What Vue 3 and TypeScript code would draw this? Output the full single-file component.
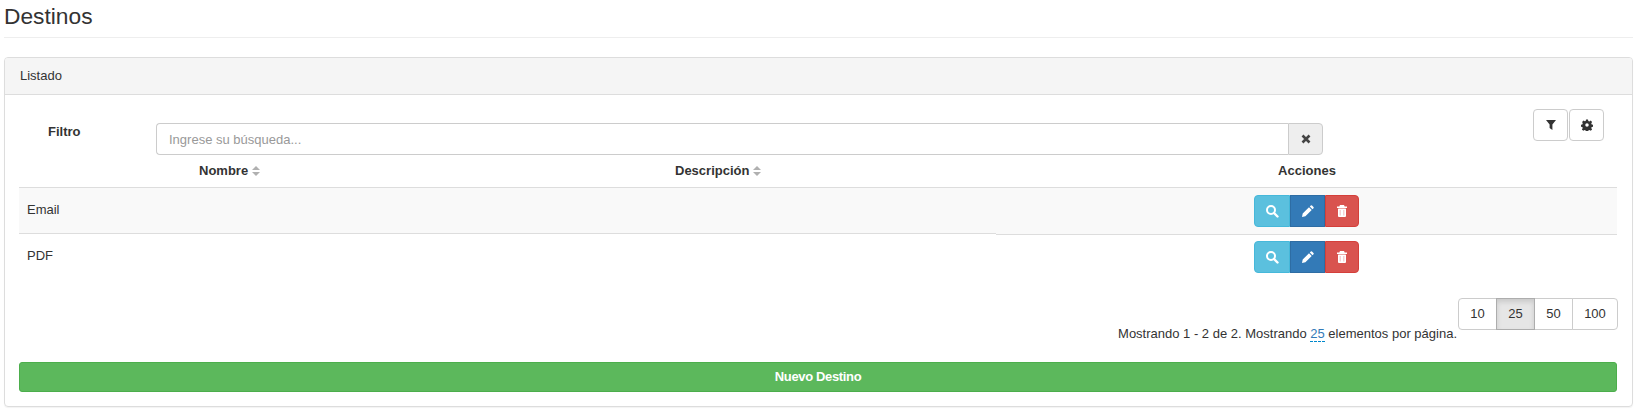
<script setup lang="ts">
interface Row { name: string }
const rows: Row[] = [{ name: 'Email' }, { name: 'PDF' }]
const sizes = [10, 25, 50, 100]
</script>

<template>
  <div class="page">
    <h3 class="title">Destinos</h3>
    <section class="panel">
      <div class="panel-head">Listado</div>
      <div class="panel-body">
        <div class="filter-row">
          <label class="filter-label">Filtro</label>
          <div class="search">
            <input class="search-input" placeholder="Ingrese su búsqueda..." />
            <button class="search-clear" aria-label="Limpiar">
              <svg viewBox="0 0 10 10" width="10" height="10"><path d="M1.500 1.500l7 7M8.500 1.500l-7 7" stroke="#444" stroke-width="2.600" fill="none" /></svg>
            </button>
          </div>
          <div class="tools">
            <button class="tool" aria-label="Filtrar">
              <svg viewBox="0 0 12 12" width="12" height="12"><path d="M1 1h10L7.400 5.600V11L4.600 9V5.600z" fill="#333" /></svg>
            </button>
            <button class="tool" aria-label="Configurar">
              <svg viewBox="0 0 24 24" width="12" height="12"><path fill="#333" fill-rule="evenodd" d="M10 1h4l.6 3 2.200.9 2.600-1.700 2.800 2.800-1.700 2.600.9 2.200 3 .6v4l-3 .6-.9 2.200 1.700 2.600-2.800 2.800-2.600-1.700-2.200.9-.6 3h-4l-.6-3-2.200-.9-2.600 1.700-2.800-2.800 1.700-2.600-.9-2.200-3-.6v-4l3-.6.9-2.200L2.200 5.800 5 3l2.600 1.700 1.800-.7zM12 8.500a3.500 3.500 0 1 0 0 7 3.500 3.500 0 0 0 0-7z" /></svg>
            </button>
          </div>
        </div>

        <div class="table">
          <div class="thead">
            <div class="th th-name">Nombre <svg class="sort" viewBox="0 0 8 10" width="8" height="10"><path d="M4 0l4 4H0zM0 6h8l-4 4z" fill="#b0b0b0" /></svg></div>
            <div class="th th-desc">Descripción <svg class="sort" viewBox="0 0 8 10" width="8" height="10"><path d="M4 0l4 4H0zM0 6h8l-4 4z" fill="#b0b0b0" /></svg></div>
            <div class="th th-act">Acciones</div>
          </div>
          <div v-for="(row, i) in rows" :key="row.name" class="tr" :class="{ odd: i === 0 }">
            <div class="cell-main">{{ row.name }}</div>
            <div class="cell-actions">
              <div class="actions">
                <button class="act info" aria-label="Ver">
                  <svg viewBox="0 0 14 14" width="14" height="14"><circle cx="6" cy="6" r="4" fill="none" stroke="#fff" stroke-width="2" /><path d="M9 9l3.500 3.500" stroke="#fff" stroke-width="2.400" stroke-linecap="round" /></svg>
                </button>
                <button class="act primary" aria-label="Editar">
                  <svg viewBox="0 0 14 14" width="14" height="14"><path d="M1 13l.7-3.400 6.300-6.300 2.700 2.700-6.300 6.300zM8.800 2.500l1-1q.6-.5 1.200 0l1.500 1.500q.5.6 0 1.200l-1 1z" fill="#fff" /></svg>
                </button>
                <button class="act danger" aria-label="Eliminar">
                  <svg viewBox="0 0 14 14" width="14" height="14"><path fill="#f3c6c9" d="M3.500 4.500h7V12h-7z" /><path fill="#fff" fill-rule="evenodd" d="M5 1h4l.7 1.500H12V4H2V2.500h2.300zM3 4.800h8V12q0 1-1 1H4q-1 0-1-1zM4.600 6v5.500h1.200V6zM8.200 6v5.500h1.200V6z" /></svg>
                </button>
              </div>
            </div>
          </div>
        </div>

        <div class="pager">
          <div class="sizes">
            <button v-for="s in sizes" :key="s" class="size" :class="{ active: s === 25 }">{{ s }}</button>
          </div>
          <p class="summary">Mostrando 1 - 2 de 2. Mostrando <a class="link">25</a> elementos por página.</p>
        </div>

        <button class="new">Nuevo Destino</button>
      </div>
    </section>
  </div>
</template>

<style>
html, body { margin: 0; background: #fff; }
</style>

<style scoped>
.page { box-sizing: border-box; width: 1642px; height: 416px; padding: 0 9px 0 4px; font: 13px/1.43 "Liberation Sans", Arial, sans-serif; color: #333; overflow: hidden; }
.title { margin: 0 0 19px; height: 38px; box-sizing: border-box; padding-top: 1px; font-size: 22.75px; font-weight: 400; line-height: 30px; border-bottom: 1px solid #eee; }
.panel { box-sizing: border-box; height: 350px; border: 1px solid #ddd; border-radius: 4px; box-shadow: 0 1px 1px rgba(0,0,0,.05); }
.panel-head { height: 37px; box-sizing: border-box; padding: 9px 15px; background: #f5f5f5; border-bottom: 1px solid #ddd; line-height: 17px; border-radius: 3px 3px 0 0; }
.panel-body { padding: 0 15px 0 14px; }
.filter-row { display: flex; height: 60px; }
.filter-label { margin: 28px 0 0 29px; width: 108px; font-weight: 700; line-height: 17px; }
.search { display: flex; margin-top: 28px; width: 1167px; height: 32px; }
.search-input { flex: 1; min-width: 0; box-sizing: border-box; padding: 7px 12px 5px; border: 1px solid #ccc; border-right: 0; border-radius: 4px 0 0 4px; font: inherit; outline: 0; }
.search-input::placeholder { color: #999; }
.search-clear { width: 35px; border: 1px solid #ccc; border-radius: 0 4px 4px 0; background: #eee; display: flex; align-items: center; justify-content: center; padding: 0; }
.tools { display: flex; gap: 1px; margin: 14px 0 0 210px; height: 32px; }
.tool { width: 35px; height: 32px; box-sizing: border-box; background: #fff; border: 1px solid #ccc; border-radius: 4px; display: flex; align-items: center; justify-content: center; padding: 0; }
.thead { display: flex; height: 33px; align-items: center; font-weight: 700; border-bottom: 1px solid #ddd; box-sizing: border-box; }
.th-name { margin-left: 180px; width: 476px; }
.th-desc { width: 582px; }
.th-act { width: 100px; text-align: center; }
.sort { vertical-align: -1px; }
.tr { display: flex; align-items: flex-start; height: 46px; }
.cell-main { box-sizing: border-box; width: 977px; height: 46px; padding: 13px 0 0 8px; line-height: 17px; }
.cell-actions { box-sizing: border-box; flex: 1; height: 47px; padding: 7px 0 0 258px; }
.tr.odd .cell-main, .tr.odd .cell-actions { background: #f9f9f9; border-bottom: 1px solid #ddd; }
.actions { display: flex; height: 32px; }
.act { width: 35px; height: 32px; box-sizing: border-box; border: 1px solid; padding: 0; display: flex; align-items: center; justify-content: center; }
.info { width: 36px; background: #5bc0de; border-color: #46b8da; border-radius: 4px 0 0 4px; }
.primary { background: #337ab7; border-color: #2e6da4; }
.danger { width: 34px; background: #d9534f; border-color: #d43f3a; border-radius: 0 4px 4px 0; }
.pager { display: flex; flex-direction: column; align-items: flex-end; height: 82px; box-sizing: border-box; padding-top: 18px; }
.sizes { display: flex; margin-right: -1px; }
.size { width: 39px; height: 32px; box-sizing: border-box; margin-left: -1px; background: #fff; border: 1px solid #ccc; font: inherit; color: #333; padding: 0; }
.size:first-child { border-radius: 4px 0 0 4px; }
.size:last-child { width: 46px; border-radius: 0 4px 4px 0; }
.size.active { background: #e6e6e6; border-color: #adadad; box-shadow: inset 0 3px 5px rgba(0,0,0,.125); position: relative; }
.summary { margin: -5px 160px 0 0; line-height: 18px; white-space: nowrap; }
.link { color: #337ab7; border-bottom: 1px dashed #08c; }
.new { display: block; width: 100%; height: 30px; box-sizing: border-box; background: #5cb85c; border: 1px solid #4cae4c; border-radius: 3px; color: #fff; font: inherit; font-weight: 700; letter-spacing: -.35px; padding: 0; }
</style>
